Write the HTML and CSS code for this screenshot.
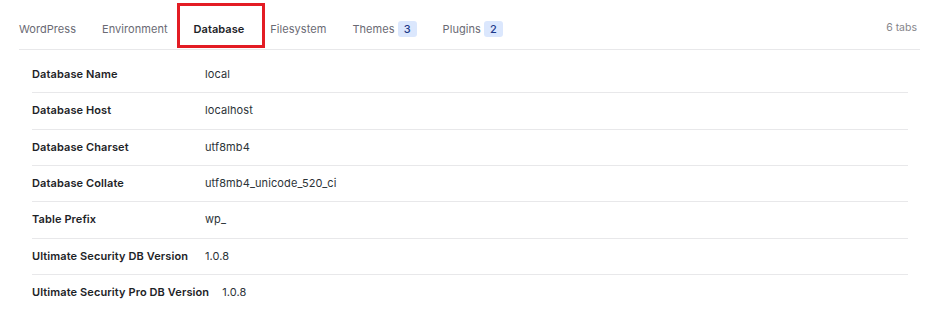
FILE: index.html
```html
<!DOCTYPE html>
<html lang="en">
<head>
<meta charset="utf-8">
<title>Database</title>
<link rel="stylesheet" href="styles.css">
</head>
<body>
<div class="panel">
  <div class="tabbar">
    <nav class="tabs">
      <span class="tab">WordPress</span>
      <span class="tab">Environment</span>
      <span class="tab active">Database<span class="highlight"></span></span>
      <span class="tab">Filesystem</span>
      <span class="tab">Themes<span class="badge">3</span></span>
      <span class="tab">Plugins<span class="badge">2</span></span>
    </nav>
    <span class="count">6 tabs</span>
  </div>
  <div class="rows">
    <div class="row"><span class="label">Database Name</span><span class="value">local</span></div>
    <div class="row"><span class="label">Database Host</span><span class="value">localhost</span></div>
    <div class="row"><span class="label">Database Charset</span><span class="value">utf8mb4</span></div>
    <div class="row"><span class="label">Database Collate</span><span class="value">utf8mb4_unicode_520_ci</span></div>
    <div class="row"><span class="label">Table Prefix</span><span class="value">wp_</span></div>
    <div class="row"><span class="label">Ultimate Security DB Version</span><span class="value">1.0.8</span></div>
    <div class="row"><span class="label">Ultimate Security Pro DB Version</span><span class="value">1.0.8</span></div>
  </div>
</div>
</body>
</html>
```

FILE: styles.css
```css
* { box-sizing: border-box; }
html, body { margin: 0; padding: 0; background: #ffffff; }
body {
  font-family: Inter, "Noto Sans", sans-serif;
  font-size: 11px;
  color: #1d2327;
}
.tabbar {
  display: flex;
  align-items: center;
  justify-content: space-between;
  margin: 0 21px 0 19px;
  padding-top: 9px;
  height: 50px;
  border-bottom: 1px solid #e8e8ea;
}
.tabs { display: flex; align-items: center; gap: 26px; }
.tab {
  position: relative;
  display: flex;
  align-items: center;
  height: 39px;
  font-size: 11px;
  letter-spacing: 0.05px;
  color: #6a6a74;
  white-space: pre;
}
.tab.active { color: #1d2327; font-weight: 600; }
.highlight {
  position: absolute;
  left: -17px;
  right: -21px;
  top: -7px;
  bottom: 1px;
  border: 3px solid #e31c24;
}
.badge {
  display: inline-flex;
  align-items: center;
  justify-content: center;
  margin-left: 3px;
  min-width: 19px;
  height: 16px;
  padding: 0 5px;
  border-radius: 3px;
  background: #dbe7fd;
  color: #1e3a8a;
  font-size: 11px;
  font-weight: 500;
  letter-spacing: 0;
}
.count { font-size: 10.5px; color: #85858b; margin-right: 3px; padding-bottom: 3px; }
.rows { margin: 7px 33px 0 32px; }
.row {
  display: flex;
  align-items: center;
  padding: 11px 0;
  line-height: 13.33px;
  border-bottom: 1px solid #e8e8ea;
}
.row:last-child { border-bottom: none; }
.label {
  min-width: 160px;
  padding-right: 13px;
  box-sizing: content-box;
  font-weight: 600;
  letter-spacing: 0.1px;
  color: #1d2327;
}
.value { color: #2c3338; letter-spacing: 0.1px; }
```
